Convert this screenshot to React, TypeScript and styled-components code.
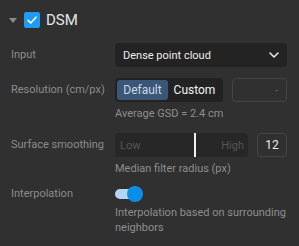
import React from "react";
import styled, { createGlobalStyle } from "styled-components";

const Global = createGlobalStyle`
  html, body { margin: 0; padding: 0; background: #303030; }
  body { font-family: Roboto, "Noto Sans", sans-serif; }
  * { box-sizing: border-box; }
`;

const Panel = styled.div`
  width: 299px;
  height: 246px;
  background: #303030;
  padding: 12px 12px 0 11px;
`;

const Header = styled.div`
  display: flex;
  align-items: center;
  height: 16px;
  margin-bottom: 15px;
`;

const Caret = styled.span`
  width: 0;
  height: 0;
  border-left: 4.5px solid transparent;
  border-right: 4.5px solid transparent;
  border-top: 5px solid #8a8a8a;
  margin-left: -2px;
  margin-right: 7px;
  margin-top: 1px;
`;

const Check = styled.span`
  width: 16px;
  height: 16px;
  border-radius: 2px;
  background: #1d9bf0;
  display: flex;
  align-items: center;
  justify-content: center;
  margin-right: 6px;
`;

const Title = styled.span`
  font-size: 15px;
  color: #e6e6e6;
  line-height: 16px;
`;

const Field = styled.div<{ $gap: number }>`
  display: grid;
  grid-template-columns: 104px 172px;
  margin-bottom: ${(p) => p.$gap}px;
`;

const Label = styled.div<{ $lh: number }>`
  font-size: 11px;
  color: #8c8c8c;
  line-height: ${(p) => p.$lh}px;
  white-space: nowrap;
`;

const Control = styled.div`
  display: flex;
  flex-direction: column;
`;

const Help = styled.div<{ $mt: number }>`
  font-size: 11px;
  color: #8e8e8e;
  line-height: 15px;
  margin-top: ${(p) => p.$mt}px;
`;

const Select = styled.div`
  height: 24px;
  border-radius: 4px;
  background: #232323;
  display: flex;
  align-items: center;
  justify-content: space-between;
  padding: 0 8px 0 8px;
  font-size: 11px;
  color: #ececec;
`;

const Row = styled.div`
  display: flex;
  align-items: center;
  gap: 9px;
`;

const Segmented = styled.div`
  height: 24px;
  width: 108px;
  border-radius: 4px;
  background: #222222;
  padding: 2px;
  display: flex;
  align-items: stretch;
`;

const Seg = styled.div<{ $active?: boolean }>`
  border-radius: 3px;
  width: ${(p) => (p.$active ? 51 : 53)}px;
  display: flex;
  align-items: center;
  justify-content: center;
  font-size: 12px;
  color: ${(p) => (p.$active ? "#c9d8e8" : "#f2f2f2")};
  background: ${(p) => (p.$active ? "#3b5777" : "transparent")};
`;

const SmallBox = styled.div`
  width: 55px;
  height: 24px;
  border-radius: 4px;
  border: 1px solid #444444;
  display: flex;
  align-items: center;
  justify-content: flex-end;
  padding-right: 8px;
  font-size: 10px;
  color: #6a6a6a;
`;

const Slider = styled.div`
  position: relative;
  width: 133px;
  height: 24px;
  border-radius: 4px;
  background: #272727;
  display: flex;
  align-items: center;
  justify-content: space-between;
  padding: 0 4px 0 5px;
  font-size: 11px;
  color: #555555;
`;

const Thumb = styled.span`
  position: absolute;
  top: 0;
  bottom: 0;
  width: 2px;
  background: #f0f0f0;
`;

const ValueBox = styled.div`
  width: 30px;
  height: 24px;
  border-radius: 4px;
  border: 1px solid #464646;
  display: flex;
  align-items: center;
  justify-content: center;
  font-size: 12px;
  color: #ececec;
`;

const Toggle = styled.div`
  position: relative;
  width: 28px;
  height: 18px;
  display: flex;
  align-items: center;
`;

const Track = styled.span`
  width: 26px;
  height: 10px;
  border-radius: 5px;
  background: #b5d4f3;
`;

const Knob = styled.span`
  position: absolute;
  left: 12px;
  top: 1px;
  width: 16px;
  height: 16px;
  border-radius: 50%;
  background: #0a8fe8;
`;

export default function App() {
  const thumbPos = 79;
  return (
    <Panel>
      <Global />
      <Header>
        <Caret />
        <Check>
          <svg width="12" height="12" viewBox="0 0 12 12">
            <path d="M2 6.3 L4.8 9 L10 3.2" fill="none" stroke="#fff" strokeWidth="1.6" strokeLinecap="round" strokeLinejoin="round" />
          </svg>
        </Check>
        <Title>DSM</Title>
      </Header>

      <Field $gap={11}>
        <Label $lh={24}>Input</Label>
        <Control>
          <Select>
            <span>Dense point cloud</span>
            <svg width="10" height="6" viewBox="0 0 10 6">
              <path d="M1 1 L5 5 L9 1" fill="none" stroke="#e8e8e8" strokeWidth="1.6" strokeLinecap="round" strokeLinejoin="round" />
            </svg>
          </Select>
        </Control>
      </Field>

      <Field $gap={12}>
        <Label $lh={24}>Resolution (cm/px)</Label>
        <Control>
          <Row>
            <Segmented>
              <Seg $active>Default</Seg>
              <Seg>Custom</Seg>
            </Segmented>
            <SmallBox>-</SmallBox>
          </Row>
          <Help $mt={4}>Average GSD = 2.4 cm</Help>
        </Control>
      </Field>

      <Field $gap={9}>
        <Label $lh={24}>Surface smoothing</Label>
        <Control>
          <Row>
            <Slider>
              <span>Low</span>
              <span>High</span>
              <Thumb style={{ left: thumbPos }} />
            </Slider>
            <ValueBox>12</ValueBox>
          </Row>
          <Help $mt={4}>Median filter radius (px)</Help>
        </Control>
      </Field>

      <Field $gap={0}>
        <Label $lh={18}>Interpolation</Label>
        <Control>
          <Toggle>
            <Track />
            <Knob />
          </Toggle>
          <Help $mt={2}>Interpolation based on surrounding neighbors</Help>
        </Control>
      </Field>
    </Panel>
  );
}
